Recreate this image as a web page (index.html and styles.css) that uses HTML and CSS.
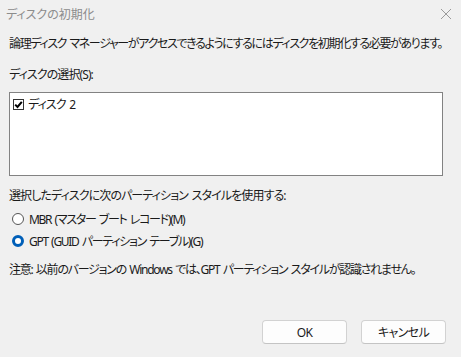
FILE: index.html
```html
<!DOCTYPE html>
<html lang="ja">
<head>
<meta charset="utf-8">
<title>ディスクの初期化</title>
<link rel="stylesheet" href="styles.css">
</head>
<body>
<div class="dialog">
  <div class="titlebar">
    <span class="title">ディスクの初期化</span>
    <svg class="close" width="12" height="12" viewBox="0 0 12 12"><path d="M1 1 L11 11 M11 1 L1 11" stroke="#9a9a9a" stroke-width="1" fill="none"/></svg>
  </div>
  <div class="content">
    <p class="intro">論理ディスク マネージャーがアクセスできるようにするにはディスクを初期化する必要があります。</p>
    <p class="label-select">ディスクの選択(S):</p>
    <div class="listbox">
      <div class="item">
        <span class="check"><svg width="9" height="9" viewBox="0 0 9 9"><path d="M1.2 4.6 L3.5 7 L7.8 1.8" stroke="#000" stroke-width="2" fill="none"/></svg></span>
        <span>ディスク 2</span>
      </div>
    </div>
    <p class="label-style">選択したディスクに次のパーティション スタイルを使用する:</p>
    <div class="radios">
      <div class="radio-row"><span class="radio"></span><span>MBR (マスター ブート レコード)(M)</span></div>
      <div class="radio-row"><span class="radio on"></span><span>GPT (GUID パーティション テーブル)(G)</span></div>
    </div>
    <p class="note">注意: 以前のバージョンの Windows では、GPT パーティション スタイルが認識されません。</p>
  </div>
  <div class="buttons">
    <button class="btn">OK</button>
    <button class="btn">キャンセル</button>
  </div>
</div>
</body>
</html>
```
FILE: styles.css
```css
html, body {
  margin: 0;
  padding: 0;
  background: #f0f0f0;
}
body {
  font-family: "Noto Sans", "Noto Sans CJK JP", sans-serif;
  font-size: 12px;
  color: #1a1a1a;
  font-feature-settings: "palt";
  width: 461px;
  height: 357px;
  overflow: hidden;
}
.dialog {
  display: flex;
  flex-direction: column;
  height: 357px;
}
.titlebar {
  height: 27px;
  display: flex;
  align-items: center;
  justify-content: space-between;
  padding: 0 8px 0 6px;
}
.title {
  color: #8c8c8c;
  font-size: 12px;
}
.close {
  margin-right: 1px;
}
.content {
  padding: 0 18px 0 9px;
  letter-spacing: -0.9px;
  word-spacing: 1.5px;
  white-space: nowrap;
}
p {
  margin: 0;
  line-height: 16px;
}
.intro {
  margin-top: 9px;
  letter-spacing: -1.35px;
}
.label-select {
  margin-top: 15px;
}
.listbox {
  margin-top: 9px;
  height: 76px;
  background: #fff;
  border: 1px solid #828282;
  padding: 3px 2px;
  box-sizing: content-box;
}
.item {
  display: flex;
  align-items: center;
  gap: 4px;
  height: 16px;
}
.check {
  width: 9px;
  height: 9px;
  border: 1px solid #333;
  background: #fff;
  display: flex;
  align-items: center;
  justify-content: center;
  margin-left: 1px;
}
.check svg { display: block; }
.label-style {
  margin-top: 12px;
}
.radios {
  margin-top: 7px;
  display: flex;
  flex-direction: column;
  gap: 6px;
}
.radio-row {
  display: flex;
  align-items: center;
  gap: 5px;
  height: 16px;
  padding-left: 3px;
  letter-spacing: -1.3px;
}
.radio {
  width: 10px;
  height: 10px;
  border: 1px solid #555;
  border-radius: 50%;
  background: #fff;
  box-sizing: content-box;
}
.radio.on {
  width: 6px;
  height: 6px;
  border: 3px solid #005fb8;
  background: #fff;
}
.note {
  margin-top: 13px;
  letter-spacing: -1.25px;
}
.buttons {
  margin-top: auto;
  display: flex;
  justify-content: flex-end;
  gap: 14px;
  padding: 0 15px 13px 0;
}
.btn {
  width: 85px;
  height: 24px;
  border: 1px solid #d2d2d2;
  border-bottom-color: #c4c4c4;
  border-radius: 4px;
  background: #fdfdfd;
  font-family: inherit;
  font-size: 12px;
  color: #1a1a1a;
  font-feature-settings: "palt";
  letter-spacing: -0.6px;
  padding: 0;
}
```
